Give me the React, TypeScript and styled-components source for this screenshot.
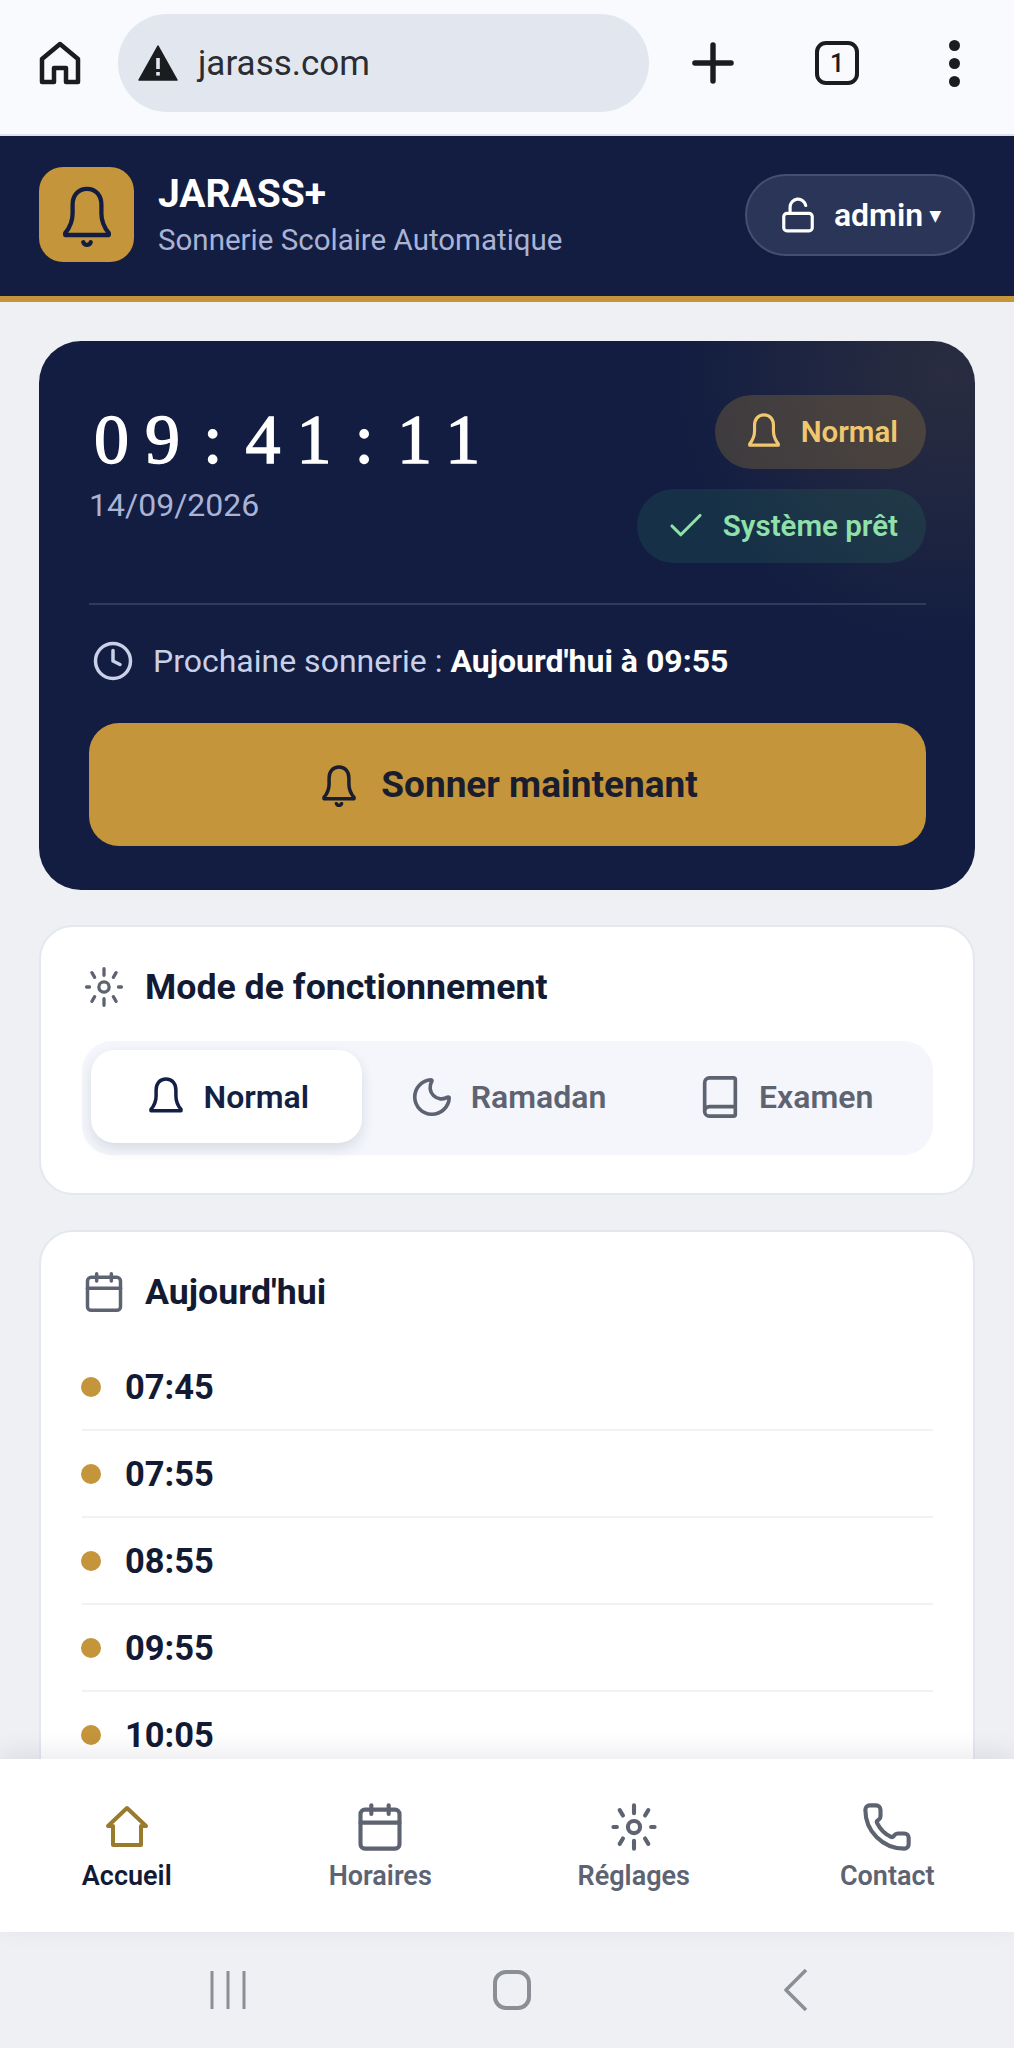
import React from 'react';
import styled, { createGlobalStyle } from 'styled-components';
import { Book, Calendar, Check, Clock, LockOpen, Moon, Phone, Plus } from 'lucide-react';

const GlobalStyle = createGlobalStyle`
  html, body {
    margin: 0;
    padding: 0;
    background: #eef0f4;
    font-family: Roboto, "Liberation Sans", sans-serif;
  }
  * { box-sizing: border-box; }
`;

const Screen = styled.div`
  width: 1014px;
  height: 2048px;
  display: flex;
  flex-direction: column;
  overflow: hidden;
  background: #eef0f4;
`;

/* browser chrome */
const BrowserBar = styled.div`
  height: 134px;
  flex-shrink: 0;
  display: flex;
  align-items: center;
  padding: 0 0 8px 39px;
  background: #f8fafe;
  color: #1a1c20;
`;

const UrlPill = styled.div`
  width: 531px;
  height: 98px;
  margin-left: 37px;
  margin-right: 33px;
  padding-left: 20px;
  display: flex;
  align-items: center;
  gap: 20px;
  border-radius: 49px;
  background: #e2e7ef;
  font-size: 35px;
  color: #2a2d33;
`;

const TabCount = styled.div`
  width: 44px;
  height: 44px;
  margin-left: 71px;
  margin-right: 90px;
  display: flex;
  align-items: center;
  justify-content: center;
  border: 4px solid #1a1c20;
  border-radius: 11px;
  font-size: 25px;
  font-weight: 500;
`;

const MenuDots = styled.div`
  display: flex;
  flex-direction: column;
  gap: 7px;
  span {
    width: 11px;
    height: 11px;
    border-radius: 50%;
    background: #1a1c20;
  }
`;

/* app header */
const Header = styled.header`
  height: 168px;
  flex-shrink: 0;
  display: flex;
  align-items: center;
  padding: 0 39px 3px;
  gap: 24px;
  background: #121d41;
  border-top: 2px solid #dfe2ee;
  border-bottom: 6px solid #c4953a;
`;

const LogoBox = styled.div`
  width: 95px;
  height: 95px;
  display: flex;
  align-items: center;
  justify-content: center;
  border-radius: 24px;
  background: #c4953a;
  color: #121d41;
`;

const Brand = styled.div`
  flex: 1;
  display: flex;
  flex-direction: column;
  gap: 7px;
`;

const BrandName = styled.div`
  font-size: 39px;
  line-height: 44px;
  font-weight: 700;
  color: #fff;
`;

const BrandTagline = styled.div`
  font-size: 29.5px;
  line-height: 34px;
  color: #aab3d6;
`;

const AdminButton = styled.div`
  width: 230px;
  height: 82px;
  display: flex;
  align-items: center;
  justify-content: center;
  gap: 17px;
  border-radius: 41px;
  background: #2a3557;
  border: 2px solid #444f72;
  color: #fff;
  font-size: 32px;
  font-weight: 600;
  small {
    font-size: 21px;
    margin-left: -10px;
  }
`;

/* scrolling content */
const Main = styled.main`
  flex: 1;
  min-height: 0;
  overflow: hidden;
  padding: 39px 39px 0;
  display: flex;
  flex-direction: column;
  gap: 35px;
`;

const Hero = styled.section`
  flex-shrink: 0;
  padding: 54px 49px 44px 50px;
  border-radius: 42px;
  color: #fff;
  background:
    radial-gradient(circle at 97% 6%, rgba(196, 149, 58, 0.13) 0, rgba(196, 149, 58, 0.08) 120px, rgba(196, 149, 58, 0) 270px),
    #121d41;
`;

const HeroTop = styled.div`
  display: flex;
  justify-content: space-between;
  padding-bottom: 40px;
  border-bottom: 2px solid #2f3a5e;
`;

// digits sit in a wide monospaced rhythm, the colons get padded to the same cell
const ClockTime = styled.div`
  font-family: "Liberation Serif", serif;
  font-size: 70px;
  line-height: 76px;
  letter-spacing: 16px;
  margin-top: 7px;
  padding-left: 5px;
  white-space: nowrap;
  -webkit-text-stroke: 1.4px #fff;
`;

const ClockColon = styled.span`
  padding: 0 7px;
`;

const ClockDate = styled.div`
  margin-top: 8px;
  font-size: 32px;
  line-height: 38px;
  color: #aab3d6;
`;

const Badges = styled.div`
  display: flex;
  flex-direction: column;
  align-items: flex-end;
  gap: 20px;
`;

const Badge = styled.div<{ $tone: 'gold' | 'green' }>`
  height: 74px;
  display: flex;
  align-items: center;
  gap: 16px;
  padding: 0 28px;
  border-radius: 37px;
  font-size: 29.5px;
  font-weight: 600;
  color: ${(p) => (p.$tone === 'gold' ? '#f0c76e' : '#8fe0a9')};
  background: ${(p) => (p.$tone === 'gold' ? 'rgba(196, 149, 58, 0.24)' : 'rgba(52, 168, 110, 0.14)')};
`;

const NextRing = styled.div`
  height: 114px;
  padding: 0 0 2px 3px;
  display: flex;
  align-items: center;
  gap: 19px;
  font-size: 32px;
  color: #c9d0e8;
  b {
    font-weight: 700;
    color: #fff;
  }
`;

const RingButton = styled.div`
  height: 123px;
  margin-top: 4px;
  display: flex;
  align-items: center;
  justify-content: center;
  gap: 20px;
  border-radius: 30px;
  background: #c4953a;
  color: #191d2e;
  font-size: 37px;
  font-weight: 700;
`;

const Card = styled.section`
  flex-shrink: 0;
  padding: 37px 40px 38px 41px;
  border-radius: 34px;
  background: #fff;
  border: 2px solid #e4e7ee;
`;

const CardTitle = styled.div`
  display: flex;
  align-items: center;
  gap: 19px;
  height: 46px;
  font-size: 35.7px;
  font-weight: 700;
  color: #131a33;
  svg { color: #5e6372; }
`;

const ModeTrack = styled.div`
  margin-top: 31px;
  display: grid;
  grid-template-columns: repeat(3, 1fr);
  padding: 9px 9px 12px;
  border-radius: 30px;
  background: #f4f6fb;
`;

const ModeOption = styled.div<{ $active?: boolean }>`
  height: 93px;
  margin-right: ${(p) => (p.$active ? 7 : 0)}px;
  display: flex;
  align-items: center;
  justify-content: center;
  gap: 16px;
  border-radius: 24px;
  font-size: 32px;
  font-weight: 600;
  color: ${(p) => (p.$active ? '#131f45' : '#5e6372')};
  background: ${(p) => (p.$active ? '#fff' : 'transparent')};
  box-shadow: ${(p) => (p.$active ? '0 6px 14px rgba(19, 31, 69, 0.12)' : 'none')};
`;

const TimeList = styled.div`
  margin-top: 29px;
`;

const TimeRow = styled.div`
  height: 87px;
  display: flex;
  align-items: center;
  gap: 24px;
  border-bottom: 2px solid #f1f2f6;
  font-size: 34.5px;
  font-weight: 700;
  color: #131a33;
`;

const Dot = styled.span`
  width: 20px;
  height: 20px;
  margin-left: -1px;
  border-radius: 50%;
  background: #c4953a;
`;

/* bottom navigation */
const BottomNav = styled.nav`
  position: relative;
  height: 173px;
  flex-shrink: 0;
  display: grid;
  grid-template-columns: repeat(4, 1fr);
  background: #fff;
  box-shadow: 0 -6px 24px rgba(19, 26, 51, 0.09);
`;

const NavItem = styled.div<{ $active?: boolean }>`
  display: flex;
  flex-direction: column;
  align-items: center;
  padding-top: 42px;
  font-size: 27px;
  font-weight: 600;
  color: ${(p) => (p.$active ? '#131a33' : '#5e6372')};
  svg {
    color: ${(p) => (p.$active ? '#9a7a2c' : '#5e6372')};
    height: 52px;
    margin-bottom: 7px;
  }
`;

const SystemNav = styled.div`
  height: 116px;
  flex-shrink: 0;
  padding-left: 10px;
  display: flex;
  align-items: center;
  justify-content: center;
  background: #eef0f4;
  svg { color: #8b8e95; }
`;

const SystemSlot = styled.div`
  width: 284px;
  display: flex;
  justify-content: center;
`;

const times = ['07:45', '07:55', '08:55', '09:55', '10:05'];

const BrowserHome = () => (
  <svg width="42" height="44" viewBox="0 0 42 44" fill="none" stroke="currentColor" strokeWidth="4.5" strokeLinejoin="round">
    <path d="M3 18 21 3l18 15v23H27V27H15v14H3z" />
  </svg>
);

const Warning = () => (
  <svg width="40" height="36" viewBox="0 0 40 36">
    <path d="M20 1 39 35H1z" fill="#1a1c20" stroke="#1a1c20" strokeLinejoin="round" strokeWidth="1.5" />
    <rect x="18.2" y="13" width="3.6" height="11" fill="#e2e7ef" />
    <rect x="18.2" y="27" width="3.6" height="3.6" fill="#e2e7ef" />
  </svg>
);

const NavHome = () => (
  <svg width="44" height="44" viewBox="0 0 44 44" fill="none" stroke="currentColor" strokeWidth="4" strokeLinejoin="round" strokeLinecap="round">
    <path d="M3 21 22 3l19 18h-5v19H8V21z" />
  </svg>
);

const BellIcon = ({ size, clapper, stroke = 1.9 }: { size: number; clapper?: boolean; stroke?: number }) => (
  <svg width={size} height={size} viewBox="0 0 24 24" fill="none" stroke="currentColor" strokeWidth={stroke} strokeLinecap="round" strokeLinejoin="round">
    <path d="M12 2.2c-3.4 0-5.4 2.6-5.4 6v3.2c0 3-1 5.2-2.8 7.4v.7h16.4v-.7c-1.8-2.2-2.8-4.4-2.8-7.4V8.2c0-3.4-2-6-5.4-6z" />
    {clapper && <path d="M10.6 22.2a1.5 1.5 0 0 0 2.8 0" />}
  </svg>
);

const SunIcon = ({ size, stroke = 1.9 }: { size: number; stroke?: number }) => (
  <svg width={size} height={size} viewBox="0 0 24 24" fill="none" stroke="currentColor" strokeWidth={stroke} strokeLinecap="round">
    <circle cx="12" cy="12" r="2.8" />
    <path d="M12 2v3.6M12 18.4V22M2.5 12h1.6M19.9 12h1.6M5.4 4.2l1.5 2.5M17.100 17.300l1.500 2.500M18.600 4.200l-1.500 2.500M6.900 17.300l-1.500 2.500" />
  </svg>
);

const App: React.FC = () => {
  return (
    <Screen>
      <GlobalStyle />
      <BrowserBar>
        <BrowserHome />
        <UrlPill>
          <Warning />
          <span>jarass.com</span>
        </UrlPill>
        <Plus size={62} strokeWidth={2.1} />
        <TabCount>1</TabCount>
        <MenuDots>
          <span />
          <span />
          <span />
        </MenuDots>
      </BrowserBar>

      <Header>
        <LogoBox>
          <BellIcon size={64} clapper stroke={1.6} />
        </LogoBox>
        <Brand>
          <BrandName>JARASS+</BrandName>
          <BrandTagline>Sonnerie Scolaire Automatique</BrandTagline>
        </Brand>
        <AdminButton>
          <LockOpen size={38} strokeWidth={2} />
          <span>admin</span>
          <small>▾</small>
        </AdminButton>
      </Header>

      <Main>
        <Hero>
          <HeroTop>
            <div>
              <ClockTime>
                09<ClockColon>:</ClockColon>41<ClockColon>:</ClockColon>11
              </ClockTime>
              <ClockDate>14/09/2026</ClockDate>
            </div>
            <Badges>
              <Badge $tone="gold">
                <BellIcon size={42} stroke={1.8} />
                Normal
              </Badge>
              <Badge $tone="green">
                <Check size={42} strokeWidth={1.8} />
                Système prêt
              </Badge>
            </Badges>
          </HeroTop>
          <NextRing>
            <Clock size={42} strokeWidth={2} />
            <span>
              Prochaine sonnerie : <b>Aujourd'hui à 09:55</b>
            </span>
          </NextRing>
          <RingButton>
            <BellIcon size={44} clapper stroke={1.9} />
            Sonner maintenant
          </RingButton>
        </Hero>

        <Card>
          <CardTitle>
            <SunIcon size={44} stroke={1.8} />
            Mode de fonctionnement
          </CardTitle>
          <ModeTrack>
            <ModeOption $active>
              <BellIcon size={44} stroke={1.9} />
              Normal
            </ModeOption>
            <ModeOption>
              <Moon size={46} strokeWidth={1.9} />
              Ramadan
            </ModeOption>
            <ModeOption>
              <Book size={46} strokeWidth={1.9} />
              Examen
            </ModeOption>
          </ModeTrack>
        </Card>

        <Card>
          <CardTitle>
            <Calendar size={44} strokeWidth={1.9} />
            Aujourd'hui
          </CardTitle>
          <TimeList>
            {times.map((t) => (
              <TimeRow key={t}>
                <Dot />
                {t}
              </TimeRow>
            ))}
          </TimeList>
        </Card>
      </Main>

      <BottomNav>
        <NavItem $active>
          <NavHome />
          Accueil
        </NavItem>
        <NavItem>
          <Calendar size={54} strokeWidth={1.9} />
          Horaires
        </NavItem>
        <NavItem>
          <SunIcon size={52} stroke={1.9} />
          Réglages
        </NavItem>
        <NavItem>
          <Phone size={54} strokeWidth={1.9} />
          Contact
        </NavItem>
      </BottomNav>

      <SystemNav>
        <SystemSlot>
          <svg width="38" height="38" viewBox="0 0 38 38" stroke="currentColor" strokeWidth="3">
            <path d="M3 0v38M19 0v38M35 0v38" />
          </svg>
        </SystemSlot>
        <SystemSlot>
          <svg width="38" height="40" viewBox="0 0 38 40" fill="none" stroke="currentColor" strokeWidth="4">
            <rect x="2" y="2" width="34" height="36" rx="11" />
          </svg>
        </SystemSlot>
        <SystemSlot>
          <svg width="26" height="42" viewBox="0 0 26 42" fill="none" stroke="currentColor" strokeWidth="3.5" strokeLinejoin="round">
            <path d="M23 1 3 21l20 20" />
          </svg>
        </SystemSlot>
      </SystemNav>
    </Screen>
  );
};

export default App;
